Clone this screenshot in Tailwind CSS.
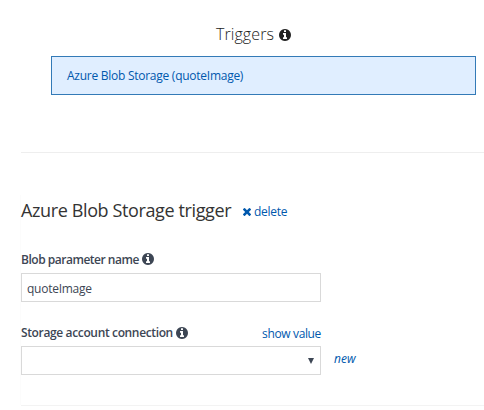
<!DOCTYPE html>
<html lang="en">
<head>
<meta charset="utf-8">
<title>Azure Blob Storage trigger</title>
<script src="https://cdn.jsdelivr.net/npm/@tailwindcss/browser@4"></script>
</head>
<body class="bg-white w-[484px] h-[410px] overflow-hidden font-['Open_Sans','Noto_Sans',sans-serif] text-[12px] tracking-[-0.26px] text-[#3d4654]">
<svg class="hidden">
  <symbol id="info" viewBox="128 128 1536 1536"><path d="M1152 1376v-160q0-14-9-23t-23-9h-96v-512q0-14-9-23t-23-9h-320q-14 0-23 9t-9 23v160q0 14 9 23t23 9h96v320h-96q-14 0-23 9t-9 23v160q0 14 9 23t23 9h448q14 0 23-9t9-23zm-128-896v-160q0-14-9-23t-23-9h-192q-14 0-23 9t-9 23v160q0 14 9 23t23 9h192q14 0 23-9t9-23zm640 416q0 209-103 385.5t-279.5 279.5-385.5 103-385.5-103-279.5-279.5-103-385.5 103-385.5 279.5-279.5 385.5-103 385.5 103 279.5 279.5 103 385.5z"/></symbol>
  <symbol id="times" viewBox="302 366 1188 1188"><path d="M1490 1322q0 40-28 68l-136 136q-28 28-68 28t-68-28l-294-294-294 294q-28 28-68 28t-68-28l-136-136q-28-28-28-68t28-68l294-294-294-294q-28-28-28-68t28-68l136-136q28-28 68-28t68 28l294 294 294-294q28-28 68-28t68 28l136 136q28 28 28 68t-28 68l-294 294 294 294q28 28 28 68z"/></symbol>
</svg>
<section class="h-[152px] pt-[22px] pl-[51px]">
  <h2 class="flex h-6 items-center pl-[165px] text-[16px] font-light tracking-[0.08px] text-[#222]">
    <span class="w-[63px] whitespace-nowrap">Triggers</span>
    <svg class="size-3 mt-px fill-[#222]"><use href="#info"/></svg>
  </h2>
  <a class="mt-[10px] flex h-[39px] w-[425px] items-center border border-[#337ab7] bg-[#e0eeff] pt-px pl-[15px] text-[#0058ad]">Azure Blob Storage (quoteImage)</a>
</section>
<hr class="ml-[21px] border-t border-[#eeeeee]">
<section class="mt-[42px] ml-5 h-[210px] border-l border-[#fcfcfc]">
  <div class="flex h-[30px] items-center">
    <h1 class="w-[222px] whitespace-nowrap text-[18px] tracking-[-0.38px] text-[#333]">Azure Blob Storage trigger</h1>
    <a class="flex items-center gap-[3px] pt-[3px] text-[#0058ad]"><svg class="size-2 fill-[#0058ad]"><use href="#times"/></svg>delete</a>
  </div>
  <label class="mt-[25px] flex h-[18px] items-center font-semibold tracking-[-0.48px]">
    <span class="w-[121px] whitespace-nowrap pt-[2px]">Blob parameter name</span>
    <svg class="size-3 fill-[#3d4654]"><use href="#info"/></svg>
  </label>
  <div class="mt-[5px] flex h-[29px] w-[300px] items-center border border-[#d9d9d9] pt-[2px] pl-[5px]">quoteImage</div>
  <div class="mt-[22px] flex h-[18px] w-[300px] items-center">
    <label class="w-[155px] whitespace-nowrap font-semibold tracking-[-0.36px]">Storage account connection</label>
    <svg class="size-3 fill-[#3d4654]"><use href="#info"/></svg>
    <a class="ml-auto pt-[2px] tracking-[-0.36px] text-[#0058ad]">show value</a>
  </div>
  <div class="mt-1 flex items-center">
    <div class="flex h-[29px] w-[300px] items-center justify-end border border-[#d9d9d9] pr-[6px]"><svg class="h-[6px] w-[6px] fill-[#3d4654]" viewBox="0 0 6 6"><path d="M0 0h6L3 6z"/></svg></div>
    <a class="ml-[13px] -mt-[3px] italic tracking-normal text-[#0058ad]">new</a>
  </div>
</section>
<hr class="ml-[21px] border-t border-[#f3f3f3]">
</body>
</html>
